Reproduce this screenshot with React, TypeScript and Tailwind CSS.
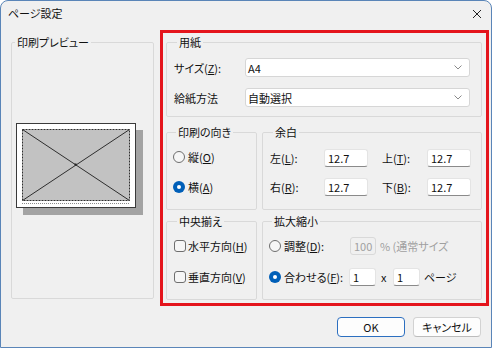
import { ReactNode } from 'react';

function Group({ title, className, children }: { title: string; className?: string; children?: ReactNode }) {
  return (
    <fieldset className={`border border-[#d9d9d9] rounded-[2px] ${className ?? ''}`}>
      <legend className="ml-[3px] px-[2px] leading-[16px]">{title}</legend>
      {children}
    </fieldset>
  );
}

function Radio({ checked }: { checked?: boolean }) {
  return checked ? (
    <span className="w-[12px] h-[12px] rounded-full bg-[#005fb8] flex items-center justify-center shrink-0">
      <span className="w-[4px] h-[4px] rounded-full bg-white" />
    </span>
  ) : (
    <span className="w-[12px] h-[12px] rounded-full border border-[#6e6e6e] bg-[#f6f6f6] shrink-0" />
  );
}

function Check() {
  return <span className="w-[12px] h-[12px] rounded-[3px] border border-[#6e6e6e] bg-[#f6f6f6] shrink-0" />;
}

function Label({ text, k }: { text: string; k: string }) {
  return (
    <span>
      {text}(<u>{k}</u>):
    </span>
  );
}

function Select({ value }: { value: string }) {
  return (
    <div className="w-[225px] h-[19px] bg-white border border-[#d6d6d6] rounded-[3px] flex items-center justify-between pl-[2px] pr-[7px]">
      <span>{value}</span>
      <svg width="8" height="5" viewBox="0 0 8 5">
        <path d="M0.5 0.5 L4 4 L7.5 0.5" fill="none" stroke="#8a8a8a" strokeWidth="1" />
      </svg>
    </div>
  );
}

function Field({ value, w = 'w-[44px]' }: { value: string; w?: string }) {
  return (
    <div className={`${w} h-[18px] bg-white border border-[#e4e4e4] border-b-[#8a8a8a] rounded-[3px] flex items-center pl-[3px]`}>
      {value}
    </div>
  );
}

function Button({ children, primary }: { children: ReactNode; primary?: boolean }) {
  return (
    <button
      className={`w-[68px] h-[20px] rounded-[4px] bg-[#fdfdfd] flex items-center justify-center border ${
        primary ? 'border-[#2c6fc0]' : 'border-[#d2d2d2] border-b-[#bcbcbc]'
      }`}
    >
      {children}
    </button>
  );
}

export default function App() {
  return (
    <div className="w-[492px] h-[348px] bg-white">
      <div className="w-full h-full flex flex-col bg-[#f0f0f0] border border-[#5a85b8] rounded-t-[8px] overflow-hidden text-[11px] leading-[14px] text-[#111] font-['Noto_Sans_CJK_JP',sans-serif] [font-feature-settings:'palt']">
        {/* Title bar */}
        <div className="h-[29px] shrink-0 flex items-start justify-between pl-[7px] pr-[9px] pt-[5px]">
          <span className="text-[11px]">ページ設定</span>
          <svg width="10" height="10" viewBox="0 0 10 10" className="mt-[3px]">
            <path d="M1 1 L9 9 M9 1 L1 9" stroke="#222" strokeWidth="1" />
          </svg>
        </div>

        <div className="flex pl-[10px] gap-[6px]">
          {/* Preview */}
          <Group title="印刷プレビュー" className="w-[143px] h-[265px] mt-[4px]">
            <svg width="130" height="95" viewBox="0 0 130 95" className="ml-[4px] mt-[73px] block">
              <rect x="7" y="7" width="120" height="85" fill="#a3a3a3" />
              <rect x="0.5" y="0.5" width="119" height="84" fill="#fff" stroke="#3a3a3a" />
              <rect x="6.5" y="6.5" width="107" height="71" fill="#c2c2c2" stroke="#2e2e2e" strokeDasharray="2 1" />
              <path d="M6.5 6.5 L113.5 77.5 M113.5 6.5 L6.5 77.5" stroke="#2e2e2e" strokeWidth="1" />
              <rect x="58.5" y="40.5" width="2" height="2" fill="#222" />
              <path d="M6 80.5 L114 80.5" stroke="#8a8a8a" strokeDasharray="1 1" />
            </svg>
          </Group>

          {/* Highlighted area */}
          <div className="w-[329px] h-[276px] border-[3px] border-[#e4141c] pl-[3px] pt-[1px] flex flex-col">
            <Group title="用紙" className="w-[316px] h-[83px] pl-[7px] pt-[8px]">
              <div className="flex flex-col gap-[11px]">
                <div className="flex items-center">
                  <span className="w-[71px]"><Label text="サイズ" k="Z" /></span>
                  <Select value="A4" />
                </div>
                <div className="flex items-center">
                  <span className="w-[71px]">給紙方法</span>
                  <Select value="自動選択" />
                </div>
              </div>
            </Group>

            <div className="flex gap-[5px] mt-[7px]">
              <Group title="印刷の向き" className="w-[91px] h-[86px] pl-[6px] pt-[8px]">
                <div className="flex flex-col gap-[12px]">
                  <div className="flex items-center gap-[3px] h-[18px]">
                    <Radio />
                    <span>縦(<u>O</u>)</span>
                  </div>
                  <div className="flex items-center gap-[3px] h-[18px]">
                    <Radio checked />
                    <span>横(<u>A</u>)</span>
                  </div>
                </div>
              </Group>

              <Group title="余白" className="w-[220px] h-[86px] pl-[7px] pt-[9px]">
                <div className="flex flex-col gap-[11px]">
                  <div className="flex items-center">
                    <span className="w-[54px]"><Label text="左" k="L" /></span>
                    <Field value="12.7" />
                    <span className="w-[45px] ml-[14px]"><Label text="上" k="T" /></span>
                    <Field value="12.7" />
                  </div>
                  <div className="flex items-center">
                    <span className="w-[54px]"><Label text="右" k="R" /></span>
                    <Field value="12.7" />
                    <span className="w-[45px] ml-[14px]"><Label text="下" k="B" /></span>
                    <Field value="12.7" />
                  </div>
                </div>
              </Group>
            </div>

            <div className="flex gap-[5px] mt-[3px]">
              <Group title="中央揃え" className="w-[91px] h-[87px] pl-[7px] pt-[8px]">
                <div className="flex flex-col gap-[13px]">
                  <div className="flex items-center gap-[2px] h-[18px]">
                    <Check />
                    <span>水平方向(<u>H</u>)</span>
                  </div>
                  <div className="flex items-center gap-[2px] h-[18px]">
                    <Check />
                    <span>垂直方向(<u>V</u>)</span>
                  </div>
                </div>
              </Group>

              <Group title="拡大縮小" className="w-[220px] h-[87px] pl-[6px] pt-[8px]">
                <div className="flex flex-col gap-[13px]">
                  <div className="flex items-center h-[18px]">
                    <span className="w-[81px] flex items-center gap-[3px]">
                      <Radio />
                      <Label text="調整" k="D" />
                    </span>
                    <div className="w-[26px] h-[18px] border border-[#d9d9d9] rounded-[3px] flex items-center pl-[3px] text-[#a0a0a0]">
                      100
                    </div>
                    <span className="ml-[4px] text-[#a0a0a0]">% (通常サイズ</span>
                  </div>
                  <div className="flex items-center h-[18px]">
                    <span className="w-[80px] flex items-center gap-[3px]">
                      <Radio checked />
                      <Label text="合わせる" k="F" />
                    </span>
                    <Field value="1" w="w-[27px]" />
                    <span className="ml-[5px] w-[12px]">x</span>
                    <Field value="1" w="w-[27px]" />
                    <span className="ml-[4px]">ページ</span>
                  </div>
                </div>
              </Group>
            </div>
          </div>
        </div>

        {/* Buttons */}
        <div className="flex justify-end gap-[8px] pr-[10px] mt-[11px]">
          <Button primary>OK</Button>
          <Button>キャンセル</Button>
        </div>
      </div>
    </div>
  );
}
